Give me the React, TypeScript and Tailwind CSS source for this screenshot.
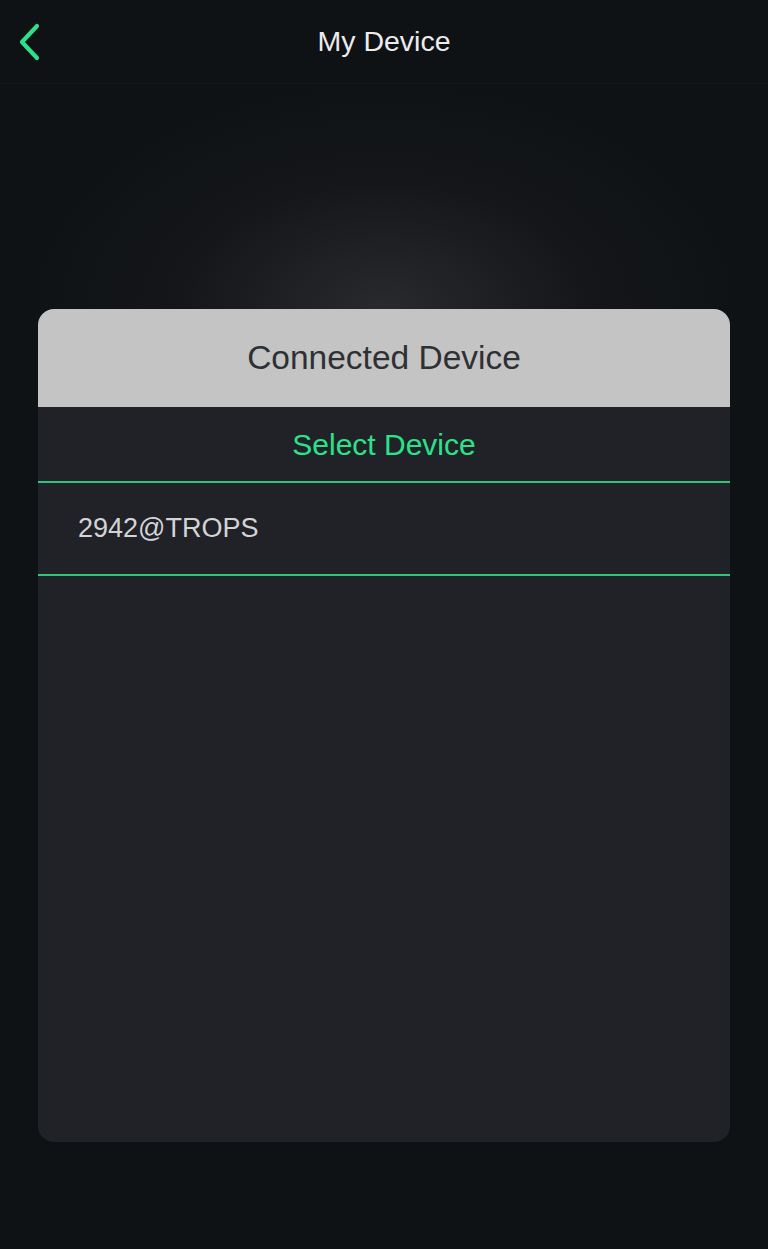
const devices = ["2942@TROPS"];

export default function App() {
  return (
    <div
      className="relative flex min-h-[1249px] w-full flex-col overflow-hidden bg-[#0f1215] text-[#ececec]"
      style={{ fontFamily: '"Liberation Sans", Arial, sans-serif' }}
    >
      {/* glow behind the card */}
      <div className="pointer-events-none absolute left-[24px] top-[80px] h-[460px] w-[720px] rounded-full bg-[radial-gradient(ellipse_at_center,rgba(56,58,62,0.6)_0%,rgba(30,30,34,0.35)_40%,rgba(15,18,21,0)_70%)]" />

      {/* top bar */}
      <header className="relative z-10 flex h-[84px] items-center border-b border-[#15181b] bg-[#0f1215]">
        <button className="flex h-[84px] w-[60px] items-center justify-center">
          <svg width="26" height="40" viewBox="0 0 26 40" fill="none">
            <path
              d="M20 4 L5 20 L20 36"
              stroke="#2be28a"
              strokeWidth="4.2"
              strokeLinecap="round"
              strokeLinejoin="round"
            />
          </svg>
        </button>
        <h1 className="absolute left-1/2 -translate-x-1/2 text-[28.5px] font-normal text-[#ececec]">
          My Device
        </h1>
      </header>

      <main className="relative z-10 flex flex-1 flex-col px-[38px] pt-[225px]">
        <div className="flex h-[833px] flex-col overflow-hidden rounded-[16px] bg-[#202227]">
          <div className="flex h-[98px] items-center justify-center bg-[#c4c4c4]">
            <span className="text-[33.5px] text-[#2e3034]">Connected Device</span>
          </div>
          <div className="flex h-[76px] items-center justify-center border-b-2 border-[#2fc47a]">
            <span className="text-[30px] text-[#2be28a]">Select Device</span>
          </div>
          {devices.map((d) => (
            <div
              key={d}
              className="flex h-[93px] items-center border-b-2 border-[#2fc47a] px-[40px]"
            >
              <span className="text-[27px] text-[#d4d4d6]">{d}</span>
            </div>
          ))}
        </div>
      </main>
    </div>
  );
}
